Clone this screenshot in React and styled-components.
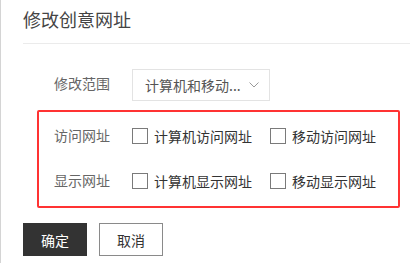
import React from "react";
import styled, { createGlobalStyle } from "styled-components";

const Global = createGlobalStyle`
  html, body { margin: 0; padding: 0; background: #fff; }
  body { font-family: "Noto Sans CJK SC", "Noto Sans", sans-serif; }
  * { box-sizing: border-box; }
`;

const Page = styled.div`
  width: 410px;
  height: 263px;
  border-left: 1px solid #d4d4d4;
  padding-left: 22px;
  overflow: hidden;
`;

const Header = styled.div`
  height: 44px;
  border-bottom: 1px solid #ebebeb;
  padding-top: 7px;
`;

const Title = styled.h1`
  margin: 0;
  font-size: 18px;
  font-weight: 400;
  line-height: 24px;
  color: #444;
`;

const ScopeRow = styled.div`
  display: flex;
  align-items: center;
  margin-top: 25px;
  padding-left: 31px;
  height: 32px;
`;

const Label = styled.span`
  width: 78px;
  flex: none;
  font-size: 14px;
  color: #666;
  line-height: 20px;
  margin-top: ${(p) => p.$shift || 0}px;
`;

const Select = styled.div`
  width: 138px;
  height: 32px;
  border: 1px solid #e3e3e3;
  display: flex;
  align-items: center;
  padding-left: 12px;
  gap: 8px;
  font-size: 14px;
  color: #555;
`;

const Highlight = styled.div`
  margin-top: 9px;
  margin-left: 14px;
  width: 363px;
  border: 2px solid #ff3333;
  border-radius: 2px;
  padding: 8px 0 9px 15px;
  display: flex;
  flex-direction: column;
  gap: 13px;
`;

const Row = styled.div`
  display: flex;
  align-items: center;
  height: 32px;
`;

const Option = styled.label`
  display: flex;
  align-items: center;
  gap: 6px;
  margin-right: 18px;
  font-size: 14px;
  color: #333;
  line-height: 20px;
`;

const Box = styled.span`
  width: 16px;
  height: 16px;
  border: 1px solid #7a7a7a;
  background: #fff;
  flex: none;
`;

const Actions = styled.div`
  display: flex;
  gap: 12px;
  margin-top: 15px;
`;

const Button = styled.button`
  width: 64px;
  height: 33px;
  font-family: inherit;
  font-size: 14px;
  padding: 0;
  border: 1px solid ${(p) => (p.$primary ? "#333" : "#8a8a8a")};
  background: ${(p) => (p.$primary ? "#333" : "#fff")};
  color: ${(p) => (p.$primary ? "#fff" : "#333")};
`;

const Chevron = () => (
  <svg width="10" height="6" viewBox="0 0 10 6" fill="none">
    <path d="M0.5 0.5L5 5L9.5 0.5" stroke="#9a9a9a" strokeWidth="1" />
  </svg>
);

const rows = [
  { label: "访问网址", options: ["计算机访问网址", "移动访问网址"] },
  { label: "显示网址", options: ["计算机显示网址", "移动显示网址"] },
];

export default function App() {
  return (
    <>
      <Global />
      <Page>
        <Header>
          <Title>修改创意网址</Title>
        </Header>
        <ScopeRow>
          <Label $shift={-4}>修改范围</Label>
          <Select>
            <span>计算机和移动...</span>
            <Chevron />
          </Select>
        </ScopeRow>
        <Highlight>
          {rows.map((r) => (
            <Row key={r.label}>
              <Label $shift={-2}>{r.label}</Label>
              {r.options.map((o) => (
                <Option key={o}>
                  <Box />
                  {o}
                </Option>
              ))}
            </Row>
          ))}
        </Highlight>
        <Actions>
          <Button $primary>确定</Button>
          <Button>取消</Button>
        </Actions>
      </Page>
    </>
  );
}
